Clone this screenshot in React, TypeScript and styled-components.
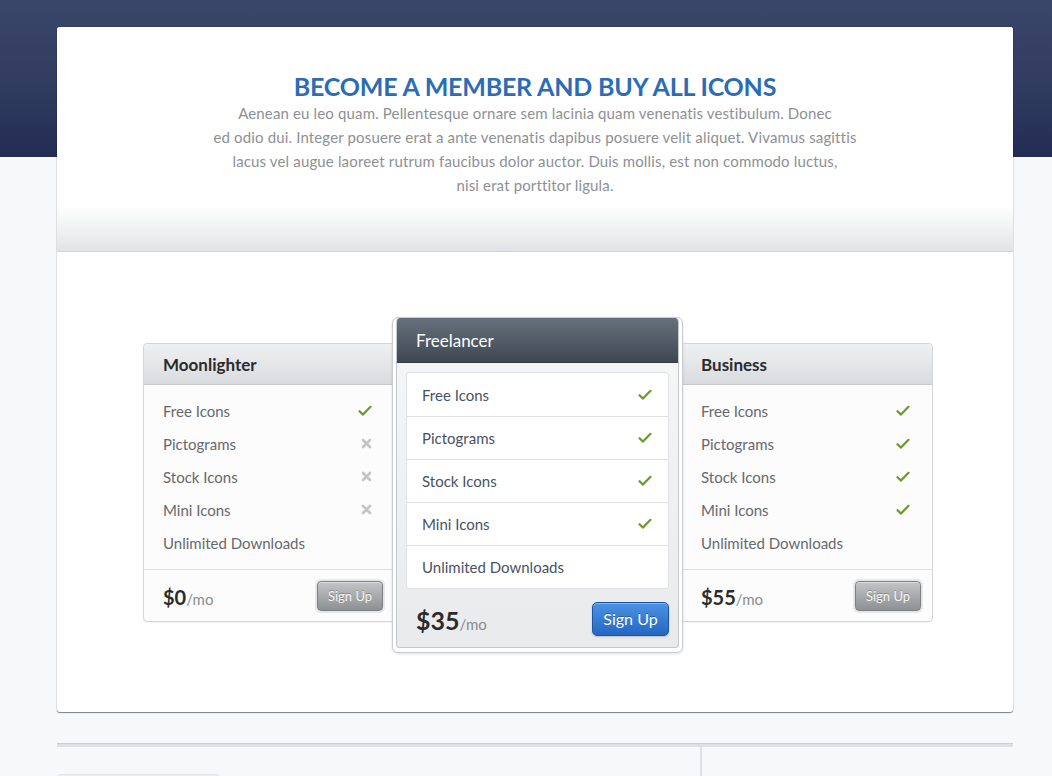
import React from 'react';
import styled, { createGlobalStyle } from 'styled-components';

const GlobalStyle = createGlobalStyle`
  html, body {
    margin: 0;
    padding: 0;
  }
  body {
    background: #f6f8fa;
    font-family: Lato, 'Open Sans', 'Liberation Sans', sans-serif;
    -webkit-font-smoothing: antialiased;
  }
`;

const Page = styled.div`
  min-height: 776px;
  padding: 27px 0 0 57px;
  box-sizing: border-box;
  overflow: hidden;
  background:
    linear-gradient(180deg, #3b4769 0%, #2f3a5f 60%, #232d54 100%) top left / 100% 157px no-repeat,
    #f6f8fa;
`;

const MainCard = styled.div`
  width: 956px;
  background: #fff;
  border-radius: 3px;
  box-shadow:
    0 0 0 1px rgba(0, 0, 0, 0.06),
    0 1px 1px rgba(0, 0, 0, 0.45);
`;

const Intro = styled.header`
  height: 225px;
  padding-top: 44px;
  box-sizing: border-box;
  text-align: center;
  border-bottom: 1px solid #d2d5d8;
  border-radius: 3px 3px 0 0;
  background: linear-gradient(180deg, #fff 0%, #fff 79%, #f6f7f7 86%, #e1e3e6 100%);
`;

const Title = styled.h1`
  margin: 0;
  font-size: 25px;
  line-height: 30px;
  font-weight: 700;
  color: #2b6cb5;
  text-transform: uppercase;
  letter-spacing: -0.2px;
`;

const Lead = styled.p`
  margin: 0 auto;
  width: 700px;
  font-size: 15px;
  line-height: 24px;
  letter-spacing: 0.15px;
  color: #8e9094;
`;

const Pricing = styled.section`
  height: 460px;
  padding: 65px 0 0 86px;
  box-sizing: border-box;
  display: flex;
  align-items: flex-start;
`;

const PlanCard = styled.div<{ $side: 'left' | 'right' }>`
  width: 252px;
  box-sizing: border-box;
  margin-top: 26px;
  background: #fcfcfc;
  border: 1px solid #d3d6d9;
  border-radius: 4px;
  box-shadow: 0 1px 1px rgba(0, 0, 0, 0.04);
  margin-left: ${(p) => (p.$side === 'right' ? '-2px' : '0')};
`;

const PlanHeader = styled.div`
  height: 41px;
  display: flex;
  align-items: center;
  padding: 1px 0 0 19px;
  box-sizing: border-box;
  font-size: 17px;
  font-weight: 700;
  color: #2a2b2d;
  border-bottom: 1px solid #c6c9cc;
  border-radius: 4px 4px 0 0;
  background: linear-gradient(180deg, #eef0f1 0%, #d9dcdf 100%);
`;

const FeatureList = styled.ul`
  list-style: none;
  margin: 0;
  padding: 9px 0 10px;
  border-bottom: 1px solid #dcdfe1;
`;

const FeatureRow = styled.li`
  height: 33px;
  display: flex;
  align-items: center;
  justify-content: space-between;
  padding: 0 22px 0 19px;
  font-size: 15px;
  color: #67696c;
`;

const PlanFooter = styled.div<{ $featured?: boolean }>`
  height: ${(p) => (p.$featured ? '58px' : '51px')};
  display: flex;
  align-items: center;
  justify-content: space-between;
  padding: ${(p) => (p.$featured ? '1px 9px 0 19px' : '0 11px 0 19px')};
  box-sizing: border-box;
`;

const Price = styled.div<{ $featured?: boolean }>`
  font-size: ${(p) => (p.$featured ? '25px' : '20px')};
  font-weight: 700;
  color: #2a2b2d;
  padding-top: ${(p) => (p.$featured ? '2px' : '3px')};

  span {
    font-size: 15px;
    font-weight: 400;
    color: #8a8c8f;
  }
`;

const GrayButton = styled.button`
  width: 66px;
  height: 30px;
  padding: 0;
  font-family: inherit;
  font-size: 13px;
  color: #f4f4f4;
  text-shadow: 0 -1px 0 rgba(0, 0, 0, 0.25);
  border: 1px solid #7c7e82;
  border-radius: 4px;
  background: linear-gradient(180deg, #c2c4c6 0%, #8e9093 100%);
  box-shadow:
    inset 0 1px 0 rgba(255, 255, 255, 0.45),
    0 0 0 2px #e6e7e8;
  cursor: pointer;
`;

const BlueButton = styled.button`
  width: 77px;
  height: 34px;
  padding: 0;
  font-family: inherit;
  font-size: 16px;
  font-weight: 400;
  color: #fff;
  text-shadow: 0 -1px 0 rgba(0, 0, 0, 0.3);
  border: 1px solid #1b55a3;
  border-radius: 5px;
  background: linear-gradient(180deg, #4b93e3 0%, #2467c3 100%);
  box-shadow:
    inset 0 1px 0 rgba(255, 255, 255, 0.35),
    0 1px 2px rgba(0, 0, 0, 0.2);
  cursor: pointer;
`;

const FeaturedFrame = styled.div`
  position: relative;
  z-index: 1;
  width: 291px;
  margin-left: -3px;
  padding: 0 3px 4px;
  box-sizing: border-box;
  background: #fff;
  border: 1px solid #c9ccd0;
  border-radius: 6px;
  box-shadow: 0 1px 3px rgba(0, 0, 0, 0.12);
`;

const FeaturedPanel = styled.div`
  border: 1px solid #c4c7cb;
  border-top: none;
  border-radius: 4px;
  background: linear-gradient(180deg, #f6f7f8 0%, #e9eaec 100%);
  overflow: hidden;
`;

const FeaturedHeader = styled.div`
  height: 45px;
  display: flex;
  align-items: center;
  padding-left: 19px;
  box-sizing: border-box;
  font-size: 17px;
  color: #fff;
  border-bottom: 1px solid #343b44;
  background: linear-gradient(180deg, #67717d 0%, #3e4751 100%);
`;

const FeaturedList = styled.ul`
  list-style: none;
  margin: 9px 9px 0;
  padding: 0;
  background: #fff;
  border: 1px solid #dfe1e4;
  border-radius: 3px;
`;

const FeaturedRow = styled.li`
  height: 43px;
  display: flex;
  align-items: center;
  justify-content: space-between;
  padding: 0 16px 0 15px;
  font-size: 15px;
  color: #4a5262;
  box-sizing: border-box;

  & + & {
    border-top: 1px solid #dfe1e4;
  }
`;

const BottomStrip = styled.div`
  width: 956px;
  margin-top: 31px;
  border-top: 1px solid #c9ced0;
  height: 3px;
  background: #dde1e3;
`;

const BottomRow = styled.div`
  display: grid;
  grid-template-columns: 645px 1fr;
  width: 956px;
  height: 40px;
`;

const BottomLeft = styled.div`
  border-right: 2px solid #dde1e3;
`;

const TabStub = styled.div`
  margin-top: 27px;
  width: 163px;
  height: 12px;
  border-radius: 4px 4px 0 0;
  background: #eceff2;
  border-top: 1px solid #e3e7ea;
`;

const Check = () => (
  <svg width="14" height="12" viewBox="0 0 14 12">
    <path d="M1.5 6.2 L5 9.6 L12.5 1.8" fill="none" stroke="#6b9a2c" strokeWidth="2.2" strokeLinecap="round" strokeLinejoin="round" />
  </svg>
);

const Cross = () => (
  <svg width="11" height="11" viewBox="0 0 11 11">
    <path d="M2 2 L9 9 M9 2 L2 9" fill="none" stroke="#c3c4c6" strokeWidth="2.6" strokeLinecap="round" />
  </svg>
);

type Mark = 'check' | 'cross' | 'none';

const features = ['Free Icons', 'Pictograms', 'Stock Icons', 'Mini Icons', 'Unlimited Downloads'];

const renderMark = (m: Mark) => (m === 'check' ? <Check /> : m === 'cross' ? <Cross /> : null);

interface SidePlanProps {
  name: string;
  price: string;
  marks: Mark[];
  side: 'left' | 'right';
}

const SidePlan: React.FC<SidePlanProps> = ({ name, price, marks, side }) => (
  <PlanCard $side={side}>
    <PlanHeader>{name}</PlanHeader>
    <FeatureList>
      {features.map((f, i) => (
        <FeatureRow key={f}>
          {f}
          {renderMark(marks[i])}
        </FeatureRow>
      ))}
    </FeatureList>
    <PlanFooter>
      <Price>
        {price}
        <span>/mo</span>
      </Price>
      <GrayButton>Sign Up</GrayButton>
    </PlanFooter>
  </PlanCard>
);

export default function App() {
  return (
    <>
      <GlobalStyle />
      <Page>
        <MainCard>
          <Intro>
            <Title>Become a member and buy all icons</Title>
            <Lead>
              Aenean eu leo quam. Pellentesque ornare sem lacinia quam venenatis vestibulum. Donec
              <br />
              ed odio dui. Integer posuere erat a ante venenatis dapibus posuere velit aliquet. Vivamus sagittis
              <br />
              lacus vel augue laoreet rutrum faucibus dolor auctor. Duis mollis, est non commodo luctus,
              <br />
              nisi erat porttitor ligula.
            </Lead>
          </Intro>
          <Pricing>
            <SidePlan name="Moonlighter" price="$0" side="left" marks={['check', 'cross', 'cross', 'cross', 'none']} />
            <FeaturedFrame>
              <FeaturedPanel>
                <FeaturedHeader>Freelancer</FeaturedHeader>
                <FeaturedList>
                  {features.map((f, i) => (
                    <FeaturedRow key={f}>
                      {f}
                      {i < 4 && <Check />}
                    </FeaturedRow>
                  ))}
                </FeaturedList>
                <PlanFooter $featured>
                  <Price $featured>
                    $35<span>/mo</span>
                  </Price>
                  <BlueButton>Sign Up</BlueButton>
                </PlanFooter>
              </FeaturedPanel>
            </FeaturedFrame>
            <SidePlan name="Business" price="$55" side="right" marks={['check', 'check', 'check', 'check', 'none']} />
          </Pricing>
        </MainCard>
        <BottomStrip />
        <BottomRow>
          <BottomLeft>
            <TabStub />
          </BottomLeft>
          <div />
        </BottomRow>
      </Page>
    </>
  );
}
